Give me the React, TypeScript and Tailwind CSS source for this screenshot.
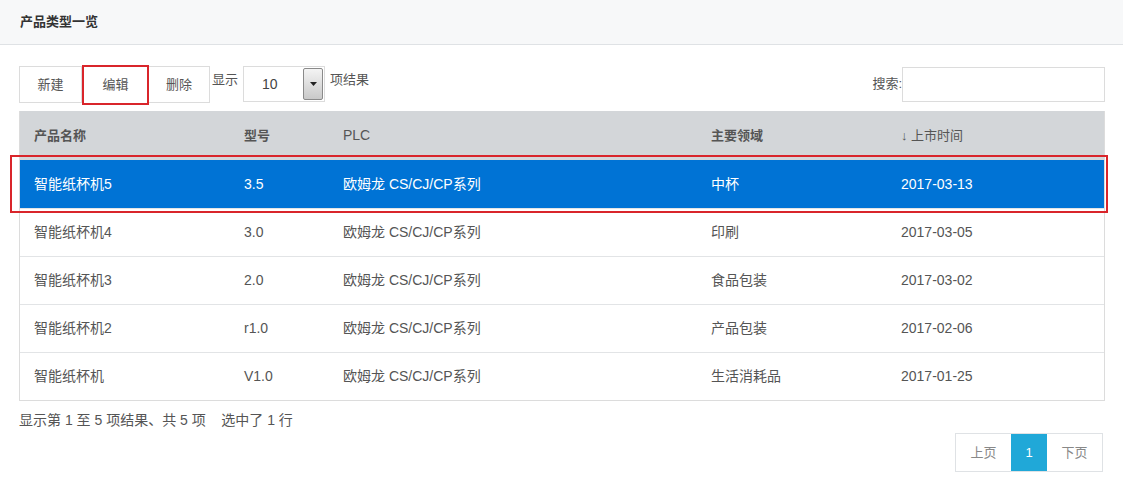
import React from 'react';

const FONT = { fontFamily: '"Liberation Sans", "Noto Sans CJK SC", sans-serif' };

const ROWS = [
  { name: '智能纸杯机5', model: '3.5', plc: '欧姆龙 CS/CJ/CP系列', area: '中杯', date: '2017-03-13', selected: true },
  { name: '智能纸杯机4', model: '3.0', plc: '欧姆龙 CS/CJ/CP系列', area: '印刷', date: '2017-03-05' },
  { name: '智能纸杯机3', model: '2.0', plc: '欧姆龙 CS/CJ/CP系列', area: '食品包装', date: '2017-03-02' },
  { name: '智能纸杯机2', model: 'r1.0', plc: '欧姆龙 CS/CJ/CP系列', area: '产品包装', date: '2017-02-06' },
  { name: '智能纸杯机', model: 'V1.0', plc: '欧姆龙 CS/CJ/CP系列', area: '生活消耗品', date: '2017-01-25' },
];

const COLS = ['w-[210px]', 'w-[99px]', 'w-[368px]', 'w-[190px]', 'flex-1'];

export default function App() {
  return (
    <div style={FONT} className="w-[1123px] h-[502px] bg-white text-[#555] overflow-hidden">
      {/* page title */}
      <div className="h-[45px] bg-[#f7f8f9] border-b border-[#dfe2e5] flex items-center px-[20px]">
        <h2 className="text-[13px] font-bold text-[#333]">产品类型一览</h2>
      </div>

      <div className="px-[19px] pt-[21px] pr-[18px]">
        {/* toolbar */}
        <div className="flex items-center h-[37px]">
          <div className="flex h-[37px] items-center">
            <button className="w-[63px] h-[37px] border border-[#dcdcdc] bg-white text-[13px] text-[#555]">新建</button>
            <button className="w-[67px] h-[40px] border-2 border-[#d9252b] bg-white text-[13px] text-[#555]">编辑</button>
            <button className="w-[61px] h-[37px] border border-[#dcdcdc] border-l-0 bg-white text-[13px] text-[#555]">删除</button>
          </div>
          <span className="ml-[2px] text-[13px] self-start mt-[4px]">显示</span>
          <div className="ml-[5px] flex h-[36px] w-[82px] border border-[#dcdcdc] self-start">
            <span className="flex-1 pl-[18px] flex items-center text-[14px] text-[#444]">10</span>
            <span className="w-[20px] m-[1px] bg-gradient-to-b from-[#f4f4f4] to-[#c9c9c9] border border-[#8a8a8a] rounded-[2px] flex items-center justify-center">
              <svg width="7" height="4" viewBox="0 0 7 4"><path d="M0 0h7L3.5 4z" fill="#222" /></svg>
            </span>
          </div>
          <span className="ml-[5px] text-[13px] self-start mt-[4px]">项结果</span>
          <div className="ml-auto flex items-center">
            <span className="text-[13px] self-start mt-[7px]">搜索:</span>
            <input className="w-[203px] h-[35px] border border-[#dcdcdc] outline-none" />
          </div>
        </div>

        {/* table */}
        <div className="relative mt-[8px]">
          <div className="border border-[#dcdcdc] border-t-0">
            <div className="flex h-[49px] bg-[#d3d6d9] text-[13px] font-bold text-[#555] items-center">
              <div className={`${COLS[0]} pl-[14px]`}>产品名称</div>
              <div className={`${COLS[1]} pl-[14px]`}>型号</div>
              <div className={`${COLS[2]} pl-[14px] font-normal text-[14px]`}>PLC</div>
              <div className={`${COLS[3]} pl-[14px]`}>主要领域</div>
              <div className={`${COLS[4]} pl-[14px] font-normal`}>↓ 上市时间</div>
            </div>
            {ROWS.map((r, i) => (
              <div
                key={i}
                className={`flex h-[48px] items-center text-[14px] ${
                  r.selected ? 'bg-[#0073d5] text-white' : 'bg-white text-[#555] border-t border-[#e2e4e6]'
                }`}
              >
                <div className={`${COLS[0]} pl-[14px]`}>{r.name}</div>
                <div className={`${COLS[1]} pl-[14px]`}>{r.model}</div>
                <div className={`${COLS[2]} pl-[14px]`}>{r.plc}</div>
                <div className={`${COLS[3]} pl-[14px]`}>{r.area}</div>
                <div className={`${COLS[4]} pl-[14px]`}>{r.date}</div>
              </div>
            ))}
          </div>
          {/* selection highlight */}
          <div className="absolute left-[-9px] right-[-3px] top-[44px] h-[58px] border-2 border-[#d9252b] pointer-events-none" />
        </div>

        {/* footer */}
        <div className="mt-[9px] text-[14px] text-[#555] whitespace-pre">显示第 1 至 5 项结果、共 5 项    选中了 1 行</div>

        <div className="flex justify-end mt-[2px] pr-[2px]">
          <div className="flex h-[39px] border border-[#dfe2e5] text-[13px]">
            <span className="w-[55px] flex items-center justify-center text-[#888]">上页</span>
            <span className="w-[36px] flex items-center justify-center bg-[#20a8d8] text-white">1</span>
            <span className="w-[55px] flex items-center justify-center text-[#888]">下页</span>
          </div>
        </div>
      </div>
    </div>
  );
}
